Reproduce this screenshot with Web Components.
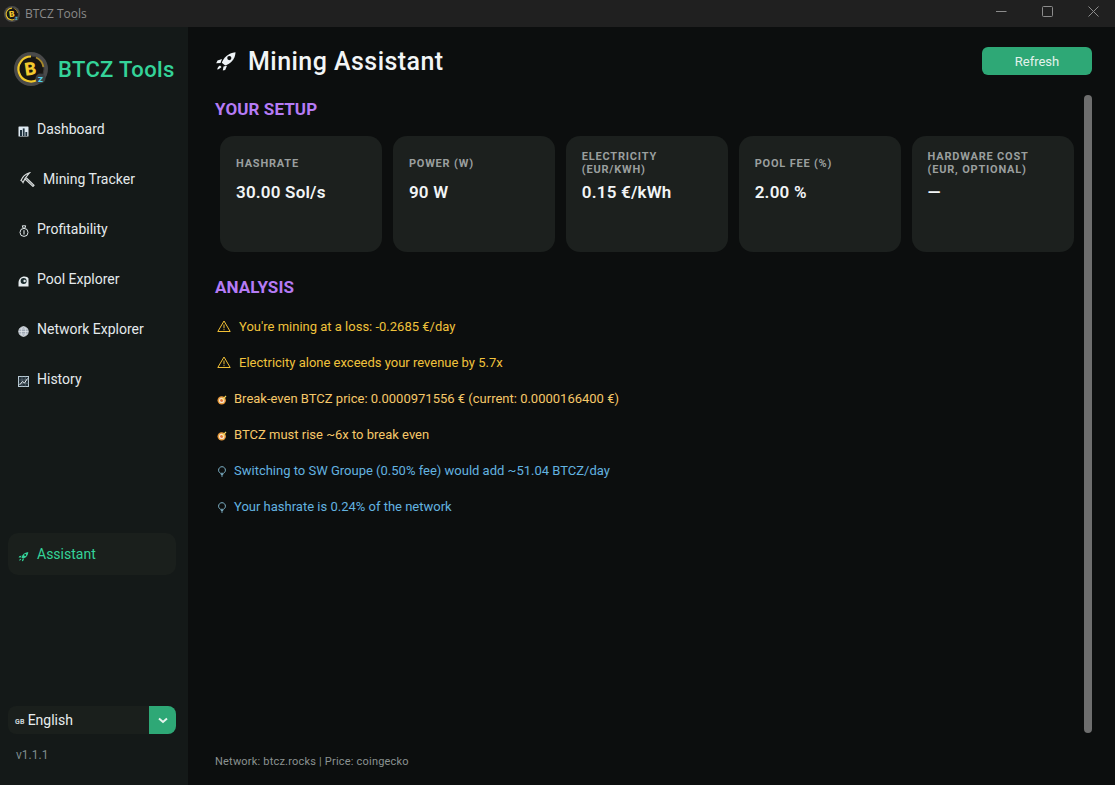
<!DOCTYPE html>
<html lang="en">
<head>
<meta charset="utf-8">
<title>BTCZ Tools</title>
<style>
  html, body { margin: 0; height: 100%; background: #0c0e0e; }
  body { font-family: Roboto, "Liberation Sans", sans-serif; overflow: hidden; }
</style>
</head>
<body>
<btcz-app></btcz-app>

<script>
const ICONS = {
  dashboard: `<svg viewBox="0 0 11 11" width="11" height="11"><rect x=".5" y=".5" width="10" height="10" fill="#dfeaf2" rx=".6"/><rect x="2" y="4" width="2" height="6" fill="#20323e"/><rect x="4.8" y="2.4" width="1.8" height="7.6" fill="#20323e"/><rect x="7.4" y="6" width="1.8" height="4" fill="#20323e"/></svg>`,
  pick: `<svg viewBox="0 0 15 15" width="15" height="15" fill="none" stroke="#d8dcdc" stroke-width="1.2"><path d="M1 8.5C2.5 4.5 5 2 9.5 .8 7.5 3 5 5.5 3 10.5 2.4 9.4 1.8 8.8 1 8.5Z"/><path d="M6.2 5.8 14 13.2 13 14.4 5 7"/></svg>`,
  bag: `<svg viewBox="0 0 10 12" width="10" height="12" fill="none" stroke="#dfe6e8" stroke-width="1"><path d="M3.3 .8h3.4L5.9 3.2H4.1Z"/><circle cx="5" cy="7.4" r="4"/><path d="M5 5.2v4.4" stroke-width="1.1"/></svg>`,
  pool: `<svg viewBox="0 0 11 11" width="11" height="11"><path d="M.5 10.5V7C.5 3 3 .5 6.5.5c2 0 3.4.8 4 2v8Z" fill="#e6ecee"/><circle cx="5.6" cy="5" r="3" fill="#1a2a2c"/><circle cx="6.6" cy="5" r="1.2" fill="#dfe8ea"/></svg>`,
  globe: `<svg viewBox="0 0 11 11" width="11" height="11" fill="#9fa8b4" stroke="#e8ecf0" stroke-width=".7"><circle cx="5.5" cy="5.5" r="4.8"/><ellipse cx="5.5" cy="5.5" rx="2.2" ry="4.8" fill="none"/><path d="M.7 5.5h9.6M1.4 3h8.2M1.4 8h8.2" fill="none"/></svg>`,
  chart: `<svg viewBox="0 0 11 11" width="11" height="11" fill="none"><rect x=".5" y=".5" width="10" height="10" fill="#243038" stroke="#b8cad4"/><path d="M.5 4h10M.5 7.300h10M4 .5v10M7.300 .5v10" stroke="#647680" stroke-width=".6"/><path d="M1.500 9 4.500 5.500 6.500 7 9.500 2.500" stroke="#e8eef2" stroke-width="1"/></svg>`,
  rocket: `<svg viewBox="0 0 22 20" width="100%" height="100%"><path d="M6.800 11.800C8.500 6.800 13 2 20.500 1.200 20.300 8.500 15.200 12.800 10.200 14.600Z" fill="currentColor"/><circle cx="14.300" cy="7.100" r="2.100" fill="var(--hole,#0c0e0e)"/><path d="M7 8 2.500 9.500 1.200 12.200 5.500 12ZM12 14.800 10.200 19 7.800 19.500 8.500 15.500ZM5 14.500C3.500 15.200 2.500 16.800 2.200 18.500 4 18.200 5.500 17.200 6.500 16Z" fill="currentColor"/></svg>`,
  warn: `<svg viewBox="0 0 14 12" width="14" height="12" fill="none" stroke="#f2c037" stroke-width="1"><path d="M7 1 13.200 11.500H.8Z" stroke-linejoin="round"/><path d="M7 4.500v3.800M7 9.200v1"/></svg>`,
  target: `<svg viewBox="0 0 10 10" width="10" height="10"><circle cx="4.700" cy="5.400" r="4.200" fill="#e89a3c"/><circle cx="4.700" cy="5.400" r="2.700" fill="#f8e6c8"/><circle cx="4.700" cy="5.400" r="1.400" fill="#d9542c"/><path d="M4.700 5.400 9 1" stroke="#f4d25a" stroke-width="1.200"/></svg>`,
  bulb: `<svg viewBox="0 0 8 11" width="8" height="11" fill="none" stroke="#7fb2c8" stroke-width="1"><path d="M2.500 7.300C1 6.300.6 5.200.6 4.100.6 2.200 2.100.7 4 .7s3.400 1.500 3.400 3.400c0 1.100-.4 2.200-1.900 3.200Z"/><path d="M2.800 8.600h2.400M3.200 10h1.600"/></svg>`,
};

class BtczLogo extends HTMLElement {
  constructor() {
    super();
    const size = this.getAttribute('size') || 34;
    this.attachShadow({ mode: 'open' }).innerHTML = `
      <style>:host { display: block; width: ${size}px; height: ${size}px; flex: none; }</style>
      <svg viewBox="0 0 34 34" width="${size}" height="${size}">
        <circle cx="17" cy="17" r="17" fill="#4a4a4a"/>
        <circle cx="17" cy="17" r="13" fill="#171512" stroke="#3a3a38" stroke-width="1"/>
        <path d="M17 4.500A12.500 12.500 0 1 0 24 27.300" fill="none" stroke="#f1c92c" stroke-width="2.200"/>
        <path d="M22 5.500A12.500 12.500 0 0 1 29.400 15" fill="none" stroke="#a8892a" stroke-width="1.800"/>
        <text x="16.500" y="23" text-anchor="middle" font-family="Roboto" font-weight="900" font-size="18" fill="#f3c92e" transform="rotate(-8 16 17)">B</text>
        <circle cx="26.500" cy="26.500" r="5" fill="#3c3f42"/>
        <text x="26.500" y="29.500" text-anchor="middle" font-family="Roboto" font-weight="900" font-size="8" fill="#4fd0ee">Z</text>
      </svg>`;
  }
}
customElements.define('btcz-logo', BtczLogo);

class TitleBar extends HTMLElement {
  constructor() {
    super();
    this.attachShadow({ mode: 'open' }).innerHTML = `
      <style>
        :host { display: flex; align-items: center; height: 27px; background: #202020; color: #8a8a8a; font: 12px "Open Sans", Roboto, sans-serif; padding-left: 4px; flex: none; }
        .name { margin-left: 5px; flex: 1; }
        .ctl { width: 46px; height: 27px; display: flex; align-items: center; justify-content: center; margin-bottom: 5px; }
        .ctl svg { display: block; }
      </style>
      <btcz-logo size="16"></btcz-logo>
      <span class="name">BTCZ Tools</span>
      <span class="ctl"><svg width="11" height="11" fill="none" stroke="#8c8c8c"><path d="M0 5.500h10.500"/></svg></span>
      <span class="ctl"><svg width="11" height="11" fill="none" stroke="#8c8c8c"><rect x=".5" y=".5" width="10" height="10" rx="1"/></svg></span>
      <span class="ctl"><svg width="11" height="11" fill="none" stroke="#8c8c8c"><path d="M.5.500l10 10M10.500.500l-10 10"/></svg></span>`;
    this.shadowRoot.querySelector('.ctl:last-child').style.marginRight = '-1px';
  }
}
customElements.define('title-bar', TitleBar);

class NavItem extends HTMLElement {
  constructor() {
    super();
    const icon = this.getAttribute('icon');
    this.attachShadow({ mode: 'open' }).innerHTML = `
      <style>
        :host { display: flex; align-items: center; height: 42px; padding-left: 10px; border-radius: 10px; color: #e4eaec; font-size: 14px; gap: 8px; }
        :host([active]) { background: #1a1f1c; color: #34d399; --hole: #1a1f1c; }
        .icon { display: flex; width: 11px; height: 11px; margin-top: 4px; align-items: center; justify-content: center; flex: none; }
        :host([icon="pick"]) .icon { width: 16px; margin: 0 0 0 1px; }
      </style>
      <span class="icon">${ICONS[icon]}</span>
      <slot></slot>`;
  }
}
customElements.define('nav-item', NavItem);

class SideBar extends HTMLElement {
  constructor() {
    super();
    this.attachShadow({ mode: 'open' }).innerHTML = `
      <style>
        :host { display: flex; flex-direction: column; width: 188px; flex: none; background: #141918; padding: 25px 12px 0 8px; box-sizing: border-box; }
        .brand { display: flex; align-items: center; gap: 10px; padding-left: 6px; height: 34px; color: #34d399; font-size: 22px; font-weight: 500; letter-spacing: .35px; }
        nav { display: flex; flex-direction: column; gap: 8px; margin-top: 22px; }
        .assistant { margin-top: 125px; }
        .lang { display: flex; align-items: center; height: 28px; margin-top: auto; background: #1a1f1c; border-radius: 8px; color: #e8eef0; font-size: 14px; overflow: hidden; }
        .flag { font-size: 7px; font-weight: 700; color: #cfd8dc; margin: 4px 3px 0 7px; letter-spacing: .2px; }
        .label { flex: 1; }
        .arrow { display: flex; width: 27px; height: 28px; align-items: center; justify-content: center; background: #2ea876; }
        .ver { height: 19px; margin: 12px 0 20px 8px; color: #7f8c8d; font-size: 12px; line-height: 19px; }
      </style>
      <div class="brand"><btcz-logo size="34"></btcz-logo><span>BTCZ Tools</span></div>
      <nav>
        <nav-item icon="dashboard">Dashboard</nav-item>
        <nav-item icon="pick">Mining Tracker</nav-item>
        <nav-item icon="bag">Profitability</nav-item>
        <nav-item icon="pool">Pool Explorer</nav-item>
        <nav-item icon="globe">Network Explorer</nav-item>
        <nav-item icon="chart">History</nav-item>
        <nav-item icon="rocket" active class="assistant">Assistant</nav-item>
      </nav>
      <div class="lang">
        <span class="flag">GB</span><span class="label">English</span>
        <span class="arrow"><svg width="10" height="7" fill="none" stroke="#e6f4ee" stroke-width="2"><path d="M1 1.500 5 5 9 1.500"/></svg></span>
      </div>
      <div class="ver">v1.1.1</div>`;
  }
}
customElements.define('side-bar', SideBar);

class StatCard extends HTMLElement {
  constructor() {
    super();
    this.attachShadow({ mode: 'open' }).innerHTML = `
      <style>
        :host { display: block; height: 116px; box-sizing: border-box; padding: 15px 16px; background: #1c201e; border-radius: 14px; }
        .label { display: flex; align-items: center; height: 24px; color: #9a9f9e; font-size: 11px; font-weight: 700; letter-spacing: .8px; line-height: 13px; white-space: pre-line; }
        .value { margin-top: 7px; color: #f2f5f6; font-size: 17px; font-weight: 600; line-height: 20px; letter-spacing: .2px; }
      </style>
      <div class="label">${this.getAttribute('label')}</div>
      <div class="value"><slot></slot></div>`;
  }
}
customElements.define('stat-card', StatCard);

class AlertRow extends HTMLElement {
  constructor() {
    super();
    const kind = this.getAttribute('kind');
    this.attachShadow({ mode: 'open' }).innerHTML = `
      <style>
        :host { display: flex; align-items: center; height: 36px; font-size: 13px; padding-left: 2px; }
        :host([kind="warn"]) { color: #f0c23c; gap: 8px; }
        :host([kind="target"]) { color: #f6c869; gap: 7px; }
        :host([kind="bulb"]) { color: #63b3e0; gap: 8px; padding-left: 3px; }
        .icon { display: flex; }
        :host([kind="target"]) .icon, :host([kind="bulb"]) .icon { margin-top: 3px; }
      </style>
      <span class="icon">${ICONS[kind]}</span>
      <span><slot></slot></span>`;
  }
}
customElements.define('alert-row', AlertRow);

class AssistantPage extends HTMLElement {
  constructor() {
    super();
    this.attachShadow({ mode: 'open' }).innerHTML = `
      <style>
        :host { display: flex; flex-direction: column; flex: 1; min-width: 0; background: #0c0e0e; padding: 20px 23px 15px 27px; box-sizing: border-box; color: #f2f5f6; }
        header { display: flex; align-items: center; height: 28px; flex: none; }
        .rocket { width: 22px; height: 20px; color: #eef3f6; margin-right: 11px; }
        h1 { flex: 1; margin: 0; font-size: 25px; font-weight: 500; letter-spacing: .45px; }
        button { width: 110px; height: 28px; border: 0; border-radius: 6px; background: #2ea876; color: #e4f2ec; font: 13px Roboto, sans-serif; }
        .body { display: flex; flex: 1; min-height: 0; margin-top: 21px; }
        .scroll { flex: 1; min-width: 0; }
        h2 { margin: 0; color: #b57bf5; font-size: 17px; font-weight: 700; line-height: 26px; letter-spacing: .1px; }
        .cards { display: grid; grid-template-columns: repeat(5, 1fr); gap: 10.500px; margin: 14px 10px 0 5px; }
        .analysis { margin-top: 22px; }
        .list { margin-top: 8px; }
        .thumb { width: 8px; margin: -1px 0 0; background: #6e6e6e; border-radius: 4px; flex: none; }
        footer { flex: none; margin-top: 21px; color: #8b9291; font-size: 11px; line-height: 16px; letter-spacing: .2px; }
      </style>
      <header>
        <span class="rocket">${ICONS.rocket}</span>
        <h1>Mining Assistant</h1>
        <button>Refresh</button>
      </header>
      <div class="body">
        <div class="scroll">
          <h2>YOUR SETUP</h2>
          <div class="cards">
            <stat-card label="HASHRATE">30.00 Sol/s</stat-card>
            <stat-card label="POWER (W)">90 W</stat-card>
            <stat-card label="ELECTRICITY&#10;  (EUR/KWH)">0.15 €/kWh</stat-card>
            <stat-card label="POOL FEE (%)">2.00 %</stat-card>
            <stat-card label="HARDWARE COST&#10;(EUR, OPTIONAL)">—</stat-card>
          </div>
          <h2 class="analysis">ANALYSIS</h2>
          <div class="list">
            <alert-row kind="warn">You're mining at a loss: -0.2685 €/day</alert-row>
            <alert-row kind="warn">Electricity alone exceeds your revenue by 5.7x</alert-row>
            <alert-row kind="target">Break-even BTCZ price: 0.0000971556 € (current: 0.0000166400 €)</alert-row>
            <alert-row kind="target">BTCZ must rise ~6x to break even</alert-row>
            <alert-row kind="bulb">Switching to SW Groupe (0.50% fee) would add ~51.04 BTCZ/day</alert-row>
            <alert-row kind="bulb">Your hashrate is 0.24% of the network</alert-row>
          </div>
        </div>
        <div class="thumb"></div>
      </div>
      <footer>Network: btcz.rocks | Price: coingecko</footer>`;
  }
}
customElements.define('assistant-page', AssistantPage);

class BtczApp extends HTMLElement {
  constructor() {
    super();
    this.attachShadow({ mode: 'open' }).innerHTML = `
      <style>
        :host { display: flex; flex-direction: column; height: 100vh; }
        .main { display: flex; flex: 1; min-height: 0; }
      </style>
      <title-bar></title-bar>
      <div class="main">
        <side-bar></side-bar>
        <assistant-page></assistant-page>
      </div>`;
  }
}
customElements.define('btcz-app', BtczApp);
</script>
</body>
</html>
